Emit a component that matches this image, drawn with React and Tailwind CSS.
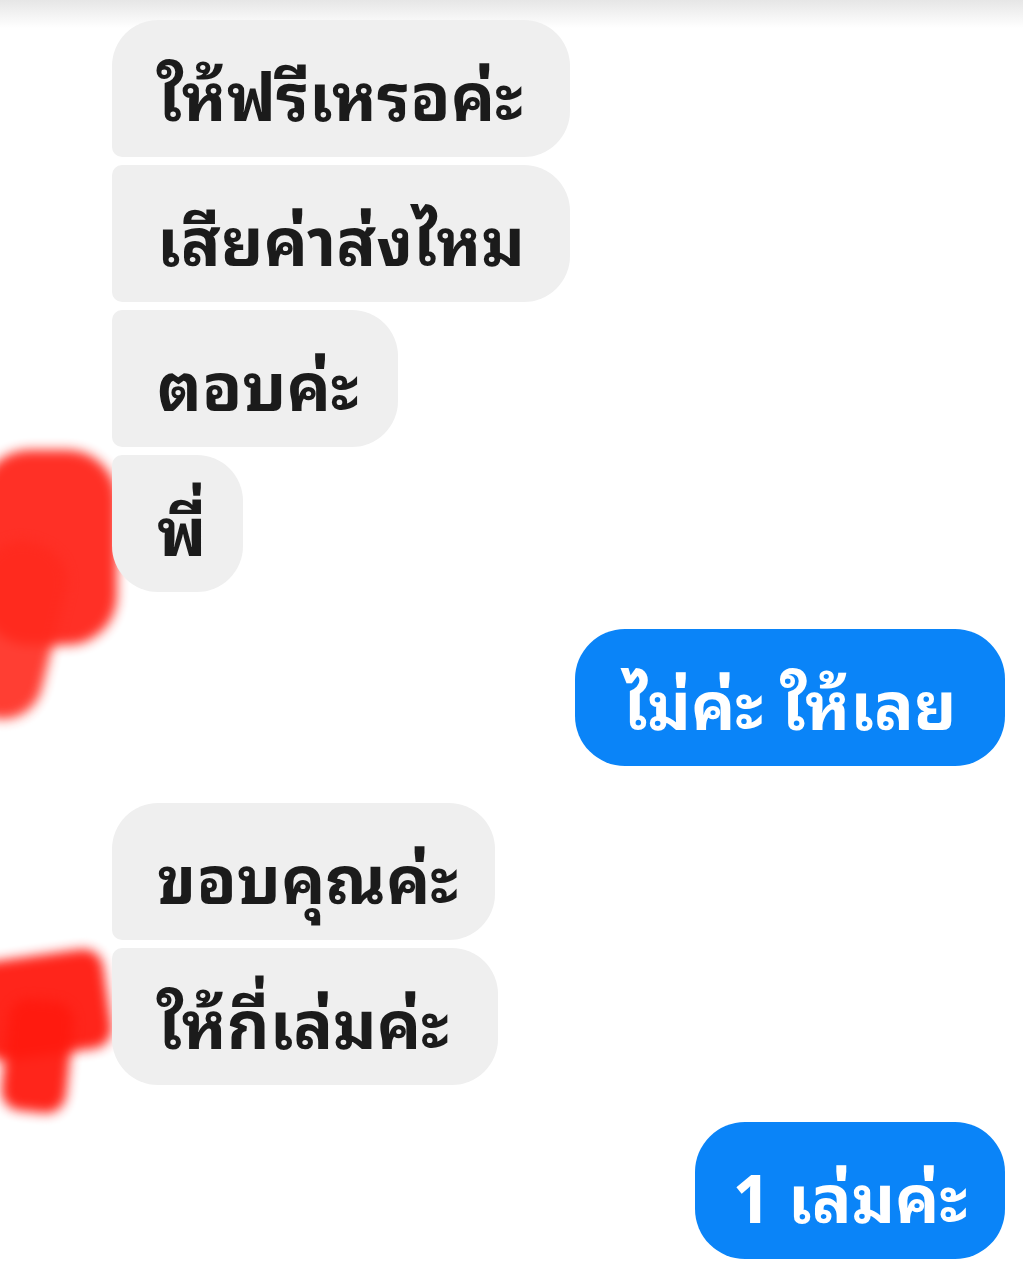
import React from "react"

const font = { fontFamily: '"Noto Sans Thai Looped", Loma, Garuda, "Noto Sans Thai", Tahoma, "Noto Sans", sans-serif' }

function In({ children, w, pos }) {
    const corners = {
        first: "rounded-tl-[46px] rounded-bl-[10px]",
        mid: "rounded-tl-[10px] rounded-bl-[10px]",
        last: "rounded-tl-[10px] rounded-bl-[46px]",
    }
    return (
        <div className={`h-[137px] ${w} flex items-center pl-[45px] pt-[4px] bg-[#efefef] text-[#1b1b1b] rounded-r-[46px] ${corners[pos]}`}>
            <span className="text-[66px] font-bold leading-none whitespace-nowrap">{children}</span>
        </div>
    )
}

function Out({ children, w }) {
    return (
        <div className="flex justify-end">
            <div className={`h-[137px] ${w} flex items-center justify-center pt-[4px] bg-[#0a84f8] text-white rounded-[50px]`}>
                <span className="text-[66px] font-bold leading-none whitespace-nowrap">{children}</span>
            </div>
        </div>
    )
}

export default function App() {
    return (
        <div className="relative w-[1023px] h-[1277px] bg-white overflow-hidden" style={font}>
            <div className="absolute top-0 left-0 right-0 h-[28px] bg-gradient-to-b from-[#e6e6e6] to-white" />

            {/* scribbles over avatars */}
            <div className="absolute left-[-20px] top-[450px] w-[137px] h-[195px] bg-[#ff1a0f] rounded-[50px] blur-[6px] opacity-90" />
            <div className="absolute left-[-30px] top-[540px] w-[85px] h-[180px] bg-[#ff2a1e] rounded-[40px] blur-[6px] rotate-[14deg] opacity-90" />
            <div className="absolute left-[-20px] top-[955px] w-[128px] h-[100px] bg-[#ff1a0f] rounded-[20px] blur-[6px] rotate-[-8deg] opacity-95" />
            <div className="absolute left-[5px] top-[1000px] w-[65px] h-[112px] bg-[#ff1a0f] rounded-[20px] blur-[6px] rotate-[6deg] opacity-95" />

            <div className="relative flex flex-col pt-[20px] pl-[112px] pr-[18px]">
                <div className="flex flex-col gap-[8px]">
                    <In w="w-[458px]" pos="first">ให้ฟรีเหรอค่ะ</In>
                    <In w="w-[458px]" pos="mid">เสียค่าส่งไหม</In>
                    <In w="w-[286px]" pos="mid">ตอบค่ะ</In>
                    <In w="w-[131px]" pos="last">พี่</In>
                </div>

                <div className="mt-[37px]">
                    <Out w="w-[430px]">ไม่ค่ะ ให้เลย</Out>
                </div>

                <div className="mt-[37px] flex flex-col gap-[8px]">
                    <In w="w-[383px]" pos="first">ขอบคุณค่ะ</In>
                    <In w="w-[386px]" pos="last">ให้กี่เล่มค่ะ</In>
                </div>

                <div className="mt-[37px]">
                    <Out w="w-[310px]">1 เล่มค่ะ</Out>
                </div>
            </div>
        </div>
    )
}
